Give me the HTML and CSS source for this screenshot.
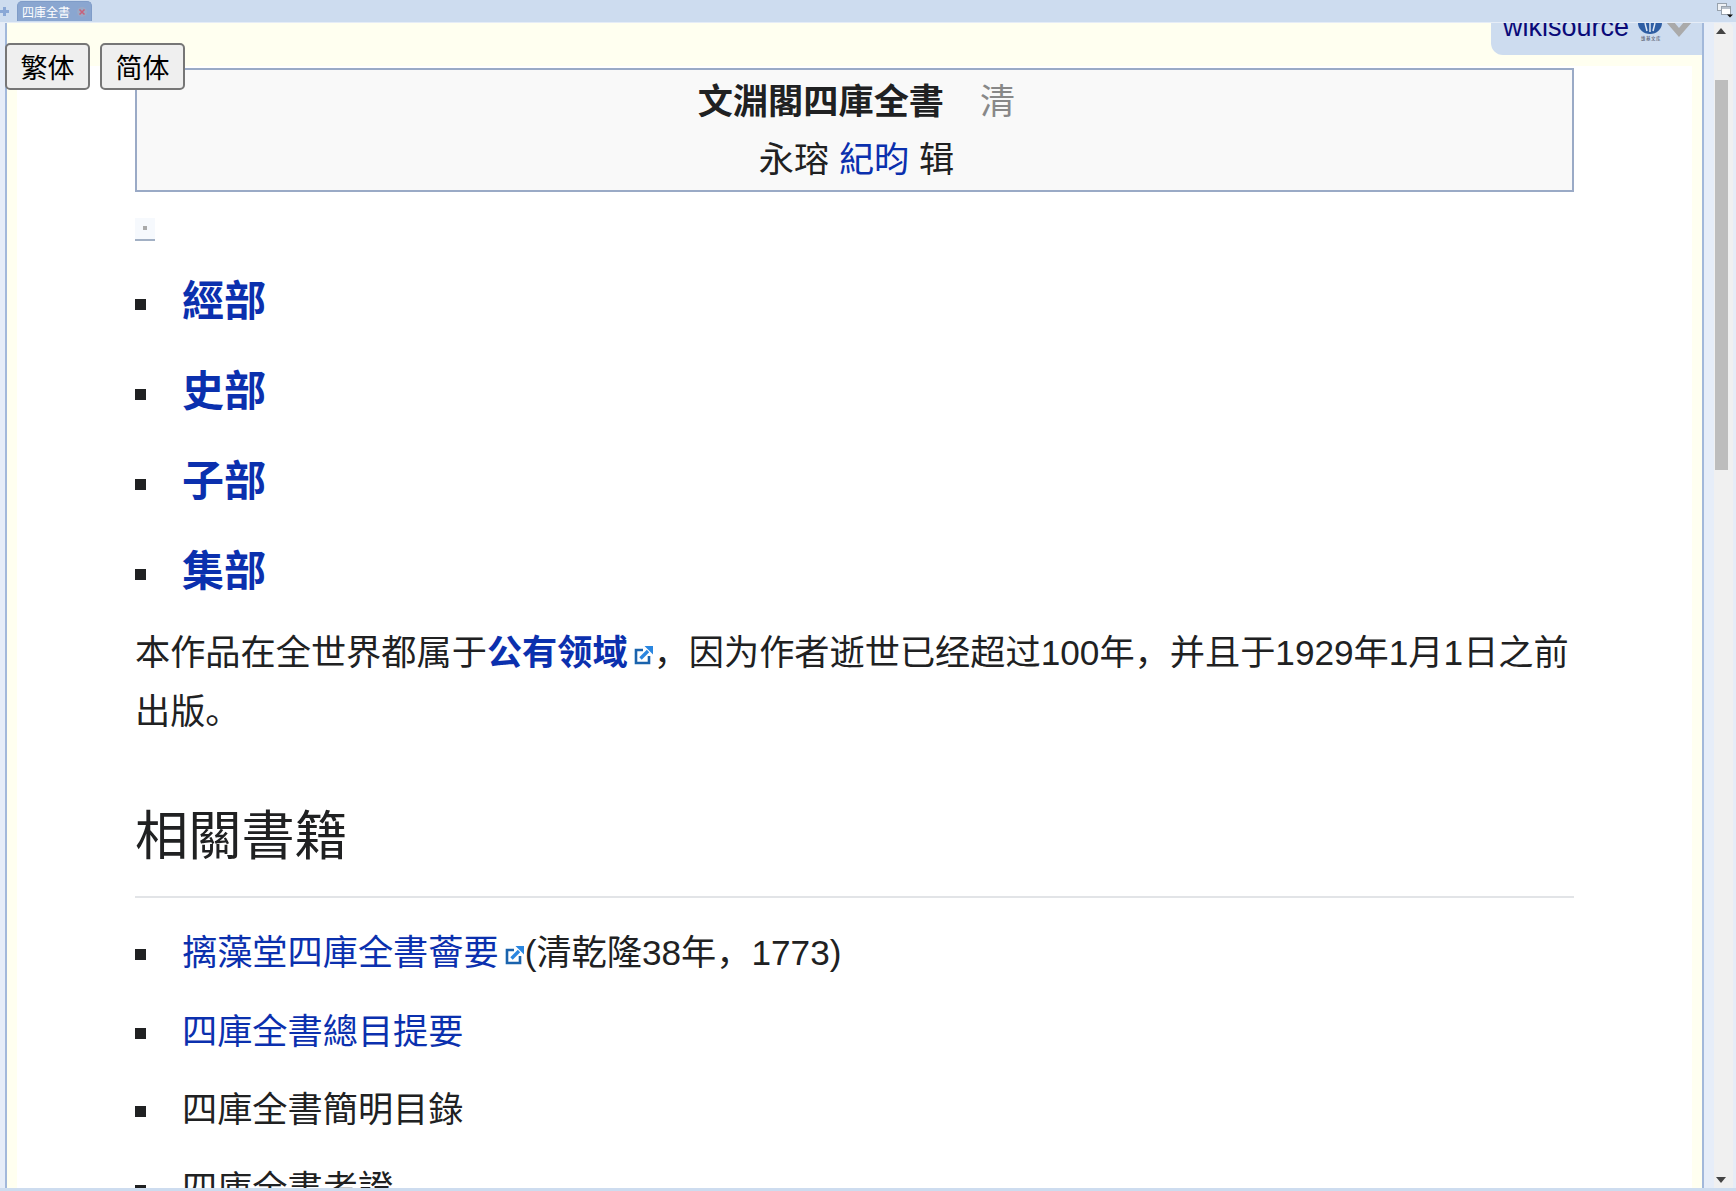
FILE: index.html
```html
<!DOCTYPE html>
<html lang="zh">
<head>
  <meta charset="UTF-8">
  <title>四庫全書</title>
  <link rel="stylesheet" href="styles.css">
</head>
<body>

  <div class="tabbar">
    <svg class="tab-add" width="9" height="9" viewBox="0 0 9 9"><path d="M3 0h3v3h3v3H6v3H3V6H0V3h3z" fill="#8aa8d6"/></svg>
    <div class="tab">
      <span>四庫全書</span>
      <svg class="tab-close" width="10" height="10" viewBox="0 0 10 10"><circle cx="5" cy="5" r="5" fill="#9aa9c6"/><path d="M2.5 2.5l5 5M7.5 2.5l-5 5" stroke="#c8607a" stroke-width="1.5"/></svg>
    </div>
    <svg class="tab-list" width="16" height="15" viewBox="0 0 16 15">
      <rect x="0.5" y="0.5" width="9" height="7" fill="#eef1f5" stroke="#98a2ad"/>
      <rect x="4.5" y="3.5" width="9" height="8" fill="#fff" stroke="#98a2ad"/>
      <rect x="5" y="4" width="8" height="2" fill="#b8c0ca"/>
      <path d="M10 11.5h6l-3 3z" fill="#111"/>
    </svg>
  </div>

  <div class="main">
    <div class="langs">
      <button class="lang">繁体</button>
      <button class="lang">简体</button>
    </div>

    <div class="frame">
      <div class="sitebar">
        <div class="sitebox">
          <span class="sitename">wikisource</span>
          <svg class="sitelogo" width="24" height="18" viewBox="0 0 24 18">
            <path d="M0 0h24a12 11 0 0 1-24 0z" fill="#2f5ea3"/>
            <path d="M12 9V0M9 8L7 0M15 8l2-8" stroke="#dfe8f5" stroke-width="1.5" fill="none"/>
            <text class="sitelogo-text" x="3" y="17">维基文库</text>
          </svg>
          <svg class="sitearrow" width="26" height="15" viewBox="0 0 26 15"><path d="M0 0h8l5 6 5-6h8L13 15z" fill="#aaa"/></svg>
        </div>
      </div>

      <div class="page">
        <div class="header-box">
          <p class="title"><b>文淵閣四庫全書</b><span class="dynasty">清</span></p>
          <p class="editors">永瑢 <a href="#">紀昀</a> 辑</p>
        </div>

        <a class="anchor" href="#"><i></i></a>

        <ul class="parts">
          <li><a href="#">經部</a></li>
          <li><a href="#">史部</a></li>
          <li><a href="#">子部</a></li>
          <li><a href="#">集部</a></li>
        </ul>

        <p class="notice">本作品在全世界都属于<a href="#"><b>公有领域</b><svg class="ext" width="20" height="20" viewBox="0 0 20 20"><path d="M9 5H2v13h13v-7" fill="none" stroke="#1a63ad" stroke-width="2.6"/><path d="M6.5 13.5L14 6" fill="none" stroke="#2a86e0" stroke-width="3.4"/><path d="M10.5 1H19v8.5z" fill="#2a86e0"/></svg></a>，因为作者逝世已经超过100年，并且于1929年1月1日之前出版。</p>

        <h2>相關書籍</h2>

        <ul class="books">
          <li><a href="#">摛藻堂四庫全書薈要<svg class="ext" width="20" height="20" viewBox="0 0 20 20"><path d="M9 5H2v13h13v-7" fill="none" stroke="#1a63ad" stroke-width="2.6"/><path d="M6.5 13.5L14 6" fill="none" stroke="#2a86e0" stroke-width="3.4"/><path d="M10.5 1H19v8.5z" fill="#2a86e0"/></svg></a>(清乾隆38年，1773)</li>
          <li><a href="#">四庫全書總目提要</a></li>
          <li>四庫全書簡明目錄</li>
          <li>四庫全書考證</li>
        </ul>
      </div>
    </div>

    <div class="scrollbar">
      <svg width="10" height="6" viewBox="0 0 10 6"><path d="M5 0l5 6H0z" fill="#444"/></svg>
      <div class="track"><div class="thumb"></div></div>
      <svg width="10" height="6" viewBox="0 0 10 6"><path d="M0 0h10L5 6z" fill="#444"/></svg>
    </div>
  </div>

</body>
</html>
```
FILE: styles.css
```css
html, body {
  margin: 0;
  height: 100%;
  overflow: hidden;
}

body {
  display: flex;
  flex-direction: column;
  background-color: #cddcef;
  color: #202122;
  font-family: "Liberation Sans", "Noto Sans CJK SC", sans-serif;
}

.tabbar {
  height: 23px;
  flex-shrink: 0;
  display: flex;
  align-items: flex-start;
  background-color: #cddcef;
  border-bottom: 1px solid #e6edf7;
  box-sizing: border-box;
}

.tab-add {
  margin: 7px 0 0 0;
}

.tab {
  margin: 1px 0 0 8px;
  width: 75px;
  height: 20px;
  box-sizing: border-box;
  padding-left: 4px;
  display: flex;
  align-items: center;
  gap: 7px;
  background-color: #8aa6d0;
  border: 1px solid #7f9cc8;
  border-bottom: none;
  border-radius: 5px 5px 0 0;
  color: #fff;
  font-size: 12px;
}

.tab-list {
  margin: 3px 3px 0 auto;
}

.main {
  flex: 1;
  display: flex;
  min-height: 0;
  margin-bottom: 3px;
  position: relative;
  background-color: #e6edf8;
}

.langs {
  position: absolute;
  top: 20px;
  left: 5px;
  z-index: 1;
  display: flex;
  gap: 10px;
}

.lang {
  width: 85px;
  height: 47px;
  padding: 0;
  background-color: #efefef;
  border: 2px solid #767676;
  border-radius: 5px;
  color: #000;
  font-family: inherit;
  font-size: 27px;
}

.frame {
  width: 1699px;
  margin-left: 5px;
  box-sizing: border-box;
  border-left: 2px solid #a2b8da;
  border-right: 2px solid #a2b8da;
  background-color: #fffff0;
  display: flex;
  flex-direction: column;
  overflow: hidden;
}

.sitebar {
  height: 43px;
  flex-shrink: 0;
  display: flex;
  justify-content: flex-end;
}

.sitebox {
  width: 211px;
  height: 32px;
  box-sizing: border-box;
  padding-left: 12px;
  display: flex;
  align-items: flex-end;
  overflow: hidden;
  background-color: #cddcef;
  border-radius: 0 0 0 12px;
}

.sitename {
  font-family: "Liberation Sans", sans-serif;
  font-size: 27px;
  line-height: 30px;
  margin-bottom: 13px;
  color: #0a0a78;
}

.sitelogo {
  margin: 0 0 14px 9px;
}

.sitelogo-text {
  font-size: 4.5px;
  font-family: "Noto Sans CJK SC", sans-serif;
  letter-spacing: 0.5px;
  fill: #445;
}

.sitearrow {
  margin: 0 0 18px 4px;
}

.page {
  flex: 1;
  margin: 0 10px;
  padding: 2px 118px 0;
  background-color: #fff;
  overflow: hidden;
}

a {
  color: #0b30ae;
  text-decoration: none;
}

.header-box {
  height: 124px;
  box-sizing: border-box;
  padding: 3px 0 0 4px;
  border: 2px solid #9aaac6;
  background-color: #f9f9f9;
  text-align: center;
  font-size: 35.2px;
}

.header-box p {
  margin: 0;
  line-height: 58px;
}

.dynasty {
  margin-left: 36px;
  color: #888;
}

.anchor {
  display: block;
  width: 20px;
  height: 21px;
  margin-top: 26px;
  background-color: #f6f9fd;
  border-bottom: 2px solid #a2b0c4;
  position: relative;
}

.anchor i {
  display: block;
  position: absolute;
  left: 8px;
  top: 8px;
  width: 4px;
  height: 4px;
  background-color: #aaa;
}

ul {
  margin: 0;
  padding: 0 0 0 47px;
  list-style: none;
}

li {
  position: relative;
}

li::before {
  content: "";
  position: absolute;
  left: -47px;
  width: 11px;
  height: 11px;
  background-color: #202122;
}

.parts {
  margin-top: 28px;
}

.parts li {
  height: 90px;
  font-size: 42px;
  font-weight: bold;
  line-height: 66px;
}

.parts li::before {
  top: 30px;
}

.notice {
  margin: -6px 0 0;
  font-size: 35.2px;
  line-height: 59px;
}

.ext {
  margin: 0 0 0 6px;
}

h2 {
  margin: 56px 0 0;
  padding-bottom: 19px;
  border-bottom: 2px solid #e2e4e7;
  font-size: 53.2px;
  font-weight: normal;
  line-height: 80px;
}

.books {
  margin-top: 26px;
}

.books li {
  height: 78.5px;
  font-size: 35.2px;
  line-height: 58px;
}

.books li::before {
  top: 25px;
}

.scrollbar {
  width: 19px;
  margin: 0 3px 0 10px;
  padding: 5px 0 5px 2px;
  box-sizing: border-box;
  background-color: #f0f0f0;
  border-radius: 0 5px 0 0;
  display: flex;
  flex-direction: column;
  align-items: flex-start;
  justify-content: space-between;
}

.track {
  flex: 1;
  width: 13px;
  margin-left: -1px;
  padding-top: 46px;
}

.thumb {
  height: 390px;
  background-color: #bdbdbd;
}
```
